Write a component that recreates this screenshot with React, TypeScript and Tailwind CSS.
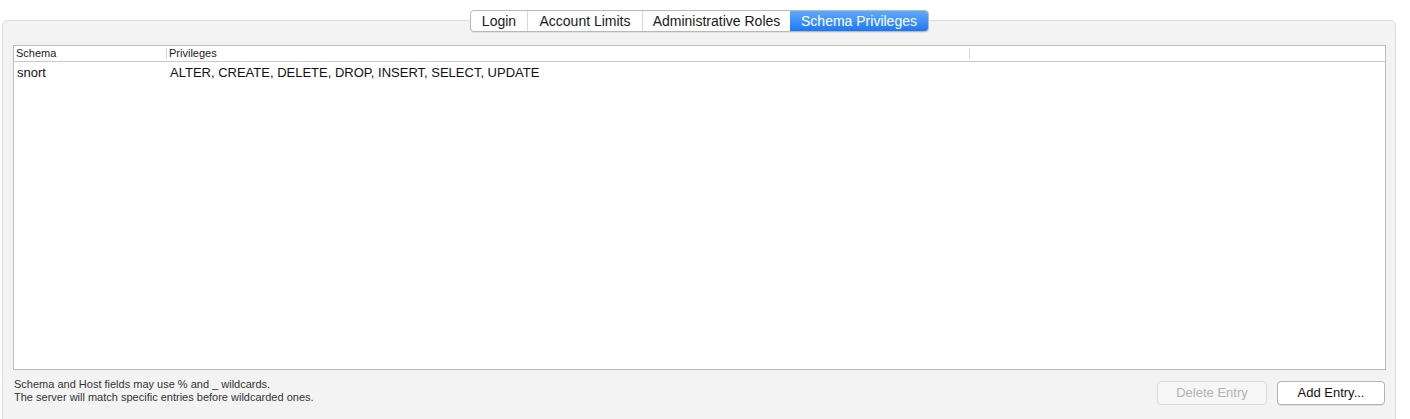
import React from "react";

const font = { fontFamily: '"Liberation Sans", Arial, Helvetica, sans-serif' };

export default function App() {
  const tabs = [
    { label: "Login", w: "w-[57px]" },
    { label: "Account Limits", w: "w-[115px]" },
    { label: "Administrative Roles", w: "w-[147px]" },
    { label: "Schema Privileges", w: "w-[138px]", active: true },
  ];
  return (
    <div className="w-[1410px] h-[419px] bg-white overflow-hidden pt-[20px] pl-[2px]" style={font}>
      <div className="w-[1394px] h-[420px] bg-[#f3f3f3] border border-[#dedede] rounded-[5px] flex flex-col">
        <div className="flex justify-center -mt-[11px] pl-[1px]">
          <div className="flex h-[22px] rounded-[4px] border border-[#b8b8b8] bg-white shadow-[0_1px_0_rgba(0,0,0,0.06)] overflow-hidden">
            {tabs.map((t, i) => (
              <div
                key={t.label}
                className={
                  t.active
                    ? `${t.w} flex items-center justify-center text-[14px] text-white bg-gradient-to-b from-[#5fa9fd] to-[#1b77f7]`
                    : `${t.w} flex items-center justify-center text-[14px] text-[#1a1a1a] ${i < 2 ? "border-r border-[#d9d9d9]" : ""}`
                }
              >
                {t.label}
              </div>
            ))}
          </div>
        </div>
        <div className="ml-[10px] mt-[13px] w-[1373px] h-[325px] bg-white border border-[#bdbdbd] flex flex-col">
          <div className="h-[16px] flex border-b border-[#c9c9c9] text-[11px] text-[#1a1a1a]">
            <div className="w-[152px] pl-[2px] flex items-center">Schema</div>
            <div className="w-[1px] my-[2px] bg-[#d6d6d6]"></div>
            <div className="w-[802px] pl-[2px] flex items-center">Privileges</div>
            <div className="w-[1px] my-[2px] bg-[#d6d6d6]"></div>
          </div>
          <div className="h-[21px] pt-[1px] flex items-center text-[13px] text-[#111]">
            <div className="w-[156px] pl-[3px]">snort</div>
            <div>ALTER, CREATE, DELETE, DROP, INSERT, SELECT, UPDATE</div>
          </div>
        </div>
        <div className="flex ml-[11px] mt-[7px] mr-[10px]">
          <div className="flex-1 text-[11px] leading-[13px] text-[#333] pt-[1px]">
            <div>Schema and Host fields may use % and _ wildcards.</div>
            <div>The server will match specific entries before wildcarded ones.</div>
          </div>
          <div className="flex gap-[10px] pt-[4px]">
            <div className="w-[110px] h-[24px] rounded-[4px] border border-[#dcdcdc] bg-[#f6f6f6] text-[#b3b3b3] text-[13px] flex items-center justify-center">
              Delete Entry
            </div>
            <div className="w-[108px] h-[24px] rounded-[4px] border border-[#b3b3b3] bg-white text-[#111] text-[13px] flex items-center justify-center shadow-[0_1px_0_rgba(0,0,0,0.08)]">
              Add Entry...
            </div>
          </div>
        </div>
      </div>
    </div>
  );
}
